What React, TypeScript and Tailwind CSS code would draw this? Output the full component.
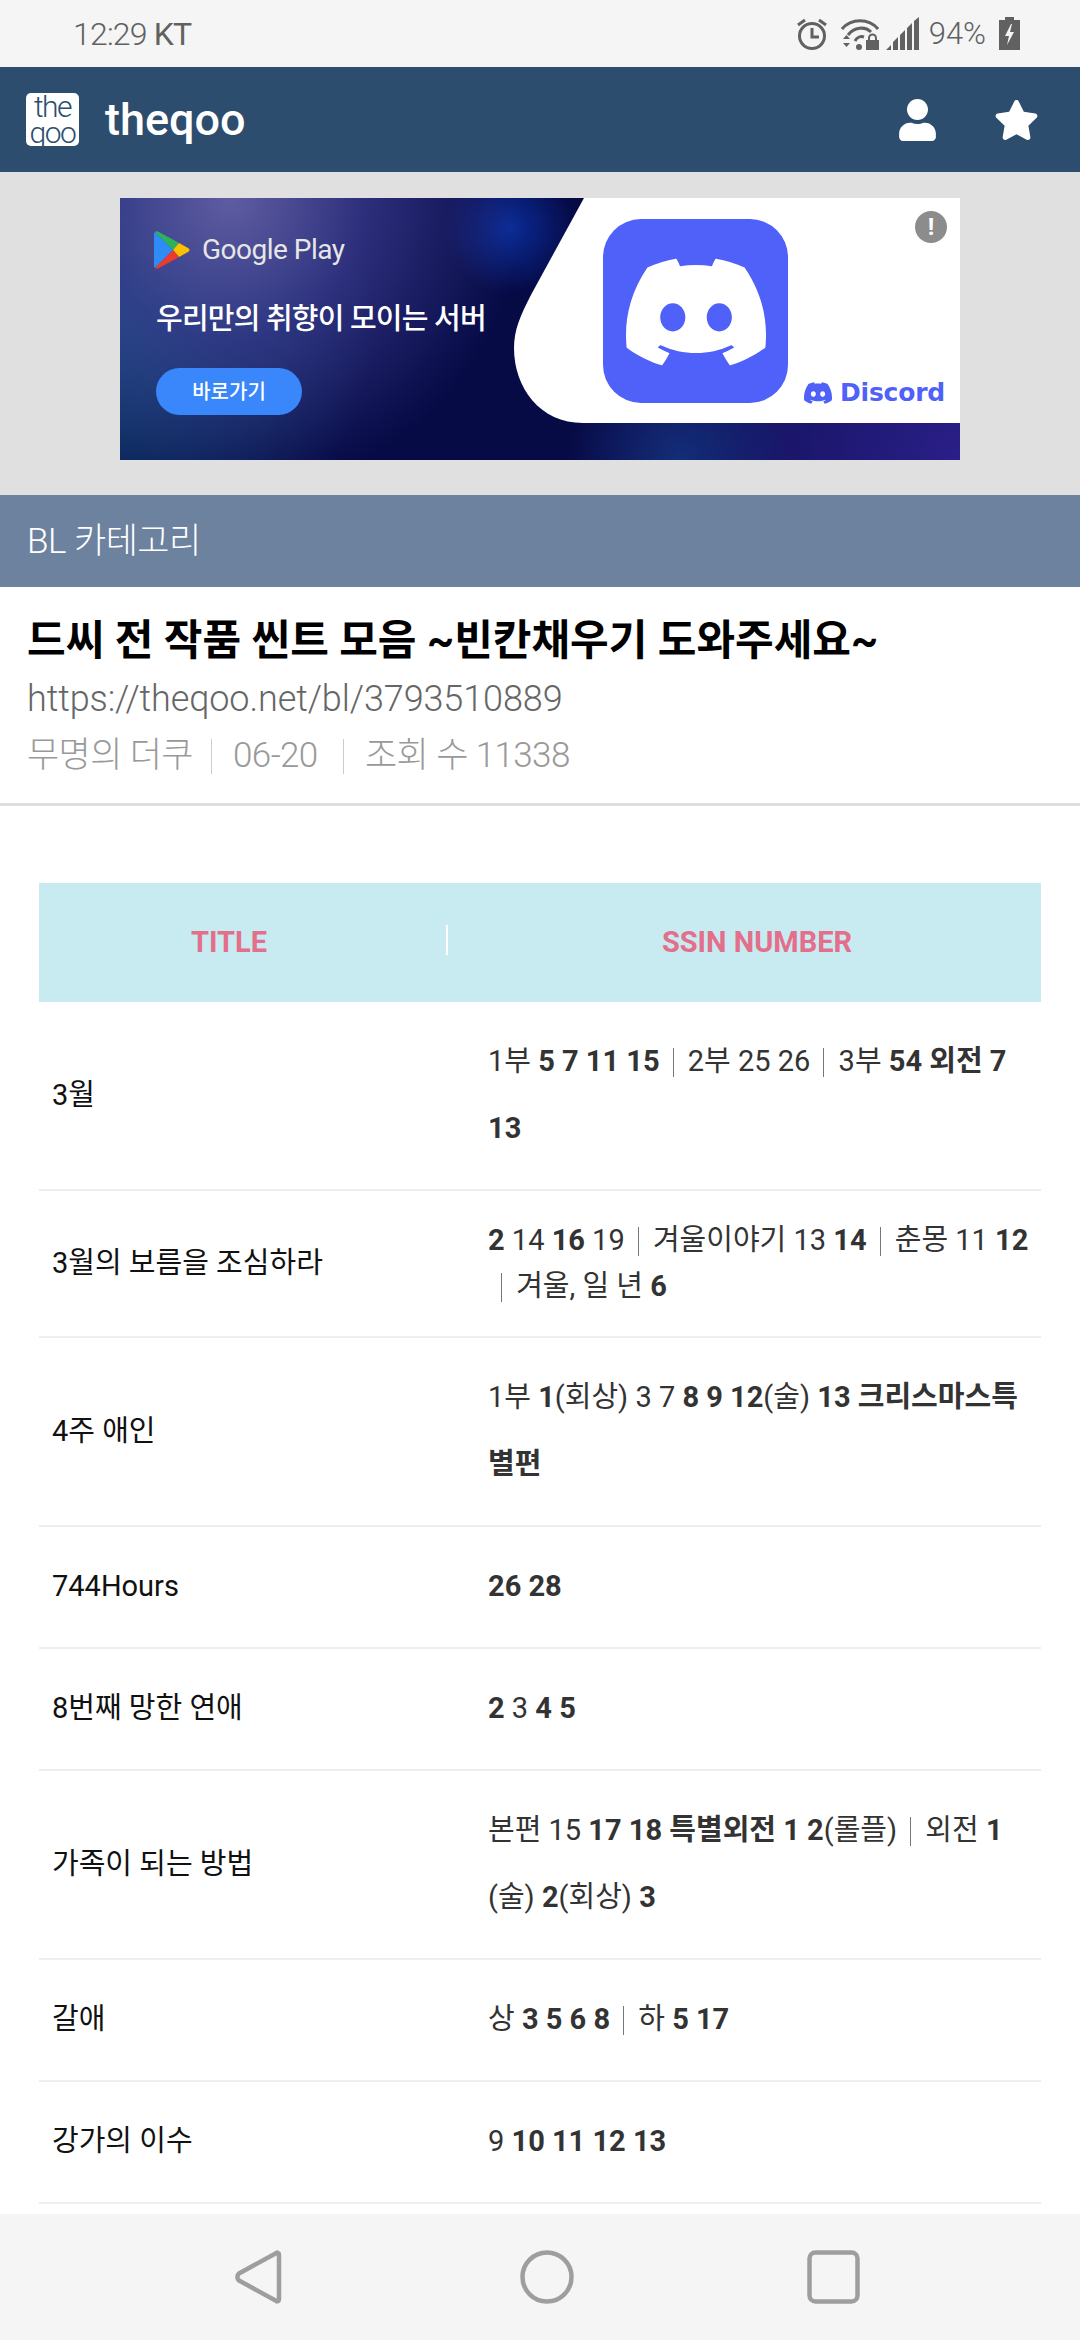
import React from 'react';
import { FaStar, FaUser } from 'react-icons/fa';
import { SiDiscord } from 'react-icons/si';

const sans = "font-['Roboto','Noto_Sans_CJK_KR',sans-serif]";

const Sep = () => <span className="ml-[13px] mr-[7px] inline-block h-[29px] w-[1px] translate-y-[6px] bg-[#777]" />;
const B = ({ children }: { children: React.ReactNode }) => <b className="font-bold">{children}</b>;

interface Row {
  title: string;
  tight?: boolean;
  ssin: React.ReactNode;
}

const rows: Row[] = [
  {
    title: '3월',
    ssin: <>1부 <B>5 7 11 15</B><Sep /> 2부 25 26<Sep /> 3부 <B>54 외전 7 13</B></>,
  },
  {
    title: '3월의 보름을 조심하라',
    tight: true,
    ssin: <><B>2</B> 14 <B>16</B> 19<Sep /> 겨울이야기 13 <B>14</B><Sep /> 춘몽 11 <B>12</B><Sep /> 겨울, 일 년 <B>6</B></>,
  },
  {
    title: '4주 애인',
    ssin: <>1부 <B>1</B>(회상) 3 7 <B>8 9 12</B>(술) <B>13 크리스마스특별편</B></>,
  },
  { title: '744Hours', ssin: <B>26 28</B> },
  { title: '8번째 망한 연애', ssin: <><B>2</B> 3 <B>4 5</B></> },
  {
    title: '가족이 되는 방법',
    ssin: <>본편 15 <B>17 18 특별외전 1 2</B>(롤플)<Sep /> 외전 <B>1</B> (술) <B>2</B>(회상) <B>3</B></>,
  },
  { title: '갈애', ssin: <>상 <B>3 5 6 8</B><Sep /> 하 <B>5 17</B></> },
  { title: '강가의 이수', ssin: <>9 <B>10 11 12 13</B></> },
];

const StatusBar = () => (
  <div className="flex h-[67px] shrink-0 items-center justify-between bg-[#f5f5f5] pl-[73px] pr-[60px] text-[#616161]">
    <span className="font-['Roboto',sans-serif] text-[32px] font-light leading-none tracking-[-0.8px]">12:29 <span className="font-normal">KT</span></span>
    <div className="flex items-center">
      <svg width="32" height="34" viewBox="0 0 32 34" fill="none" stroke="#616161" strokeWidth="3">
        <circle cx="16" cy="19" r="12.5" />
        <path d="M16 11v9h7M2 8l7-5M30 8l-7-5" />
      </svg>
      <svg className="ml-[13px]" width="38" height="33" viewBox="0 0 38 33" fill="#616161">
        <path d="M1 12C10 1 28 1 37 12" fill="none" stroke="#616161" strokeWidth="3" />
        <path d="M7 18C13 10 24 9 30 15" fill="none" stroke="#616161" strokeWidth="3" />
        <path d="M14 24c2-4 6-5 9-4" fill="none" stroke="#616161" strokeWidth="3" />
        <circle cx="18" cy="30" r="3" />
        <path d="M2 22h7l-3.5-4zM2 26h7l-3.500 4z" />
        <rect x="25" y="23" width="13" height="10" />
        <path d="M28 24v-3a3.500 3.500 0 0 1 7 0v3" fill="none" stroke="#616161" strokeWidth="2" />
      </svg>
      <svg className="ml-[7px]" width="33" height="33" viewBox="0 0 33 33" fill="#616161">
        <path d="M0 33l5-5v5zM7 33V25l5-5v13zM14 33V18l5-5v20zM21 33V11l5-5v27zM28 33V4l5-4v33z" />
      </svg>
      <span className="ml-[10px] font-['Roboto',sans-serif] text-[31px] font-light leading-none">94%</span>
      <svg className="ml-[13px]" width="21" height="33" viewBox="0 0 21 33">
        <path d="M6 0h9v3h6v30H0V3h6z" fill="#616161" />
        <path d="M12 7L6 19h4l-2 9 7-13h-4l2-8z" fill="#f5f5f5" />
      </svg>
    </div>
  </div>
);

const Header = () => (
  <div className="flex h-[105px] shrink-0 items-center bg-[#2d4d6e] pl-[26px] pr-[41px] text-white">
    <div className="flex h-[53px] w-[53px] flex-col items-center justify-center rounded-[5px] bg-white font-['Roboto',sans-serif] text-[30px] font-light leading-[26px] tracking-[-1.5px] text-[#2d4d6e]">
      <span>the</span>
      <span>qoo</span>
    </div>
    <span className={`ml-[26px] ${sans} text-[45px] font-medium leading-none`}>theqoo</span>
    <FaUser className="ml-auto h-[42px] w-[37px]" />
    <FaStar className="ml-[58px] h-[42px] w-[45px]" />
  </div>
);

const GooglePlayIcon = () => (
  <svg className="absolute left-[34px] top-[33px]" width="36" height="38" viewBox="0 0 36 38">
    <path d="M1 1L19 19 1 37C0 36 0 35 0 34V4C0 3 0 2 1 1z" fill="#2f8bf5" />
    <path d="M1 1C2 0 3 0 5 1L25 12 19 19z" fill="#2fb35a" />
    <path d="M25 12l9 5c2 1 2 3 0 4l-9 5-6-7z" fill="#fdbf00" />
    <path d="M1 37c1 1 2 1 4 0l20-11-6-7z" fill="#ee3a2c" />
  </svg>
);

const AdBanner = () => (
  <div className="h-[323px] shrink-0 bg-[#e0e0e0] pl-[120px] pt-[26px]">
    <div className="relative h-[262px] w-[840px] overflow-hidden bg-[#060a45] bg-[radial-gradient(circle_at_110px_0px,rgba(100,95,165,0.95)_0%,rgba(60,60,145,0.7)_18%,rgba(6,10,69,0)_38%),radial-gradient(circle_at_0px_120px,rgba(20,95,135,0.8)_0%,rgba(6,10,69,0)_30%),radial-gradient(circle_at_390px_30px,rgba(10,47,160,0.9)_0%,rgba(6,10,69,0)_13%),radial-gradient(circle_at_560px_262px,rgba(19,53,127,0.8)_0%,rgba(6,10,69,0)_18%),radial-gradient(circle_at_840px_262px,#2a1f88_0%,rgba(6,10,69,0)_45%)]">
      <svg className="absolute inset-0" width="840" height="262" viewBox="0 0 840 262">
        <path d="M464 0L412 95C400 118 394 132 394 150C394 190 420 225 463 225H840V0Z" fill="#fff" />
        <rect x="483" y="21" width="185" height="184" rx="38" fill="#5061f9" />
      </svg>
      <SiDiscord className="absolute left-[506px] top-[44px] h-[140px] w-[140px] text-white" />
      <GooglePlayIcon />
      <span className="absolute left-[82px] top-[31px] font-['Roboto',sans-serif] text-[28px] leading-[42px] tracking-[-0.5px] text-[#e6e6e6]">Google Play</span>
      <span className={`absolute left-[36px] top-[100px] ${sans} text-[29px] font-medium leading-[42px] tracking-[-0.8px] text-white`}>우리만의 취향이 모이는 서버</span>
      <span className={`absolute left-[36px] top-[170px] flex h-[47px] w-[146px] items-center justify-center rounded-full bg-[#3a86fb] ${sans} text-[20px] font-medium text-white`}>바로가기</span>
      <SiDiscord className="absolute left-[684px] top-[181px] h-[28px] w-[28px] text-[#5061f9]" />
      <span className="absolute left-[720px] top-[178px] font-['DejaVu_Sans',sans-serif] text-[25px] font-bold leading-[34px] tracking-[-0.2px] text-[#5061f9]">Discord</span>
      <span className="absolute left-[795px] top-[13px] flex h-[32px] w-[32px] items-center justify-center rounded-full bg-[#8c8c8c] font-['Roboto',sans-serif] text-[24px] font-bold leading-none text-white">!</span>
    </div>
  </div>
);

const PostHead = () => (
  <div className={`h-[219px] shrink-0 border-b-[3px] border-[#dedede] pl-[27px] ${sans}`}>
    <h1 className="pt-[29px] text-[42px] font-bold leading-[50px] text-black">드씨 전 작품 씬트 모음 ~빈칸채우기 도와주세요~</h1>
    <p className="mt-[6px] text-[36px] font-light leading-[54px] tracking-[-0.1px] text-[#666]">https://theqoo.net/bl/3793510889</p>
    <div className="mt-[3px] flex items-center text-[35px] font-light leading-[54px] tracking-[-0.6px] text-[#999]">
      <span className="w-[184px]">무명의 더쿠</span>
      <span className="h-[35px] w-[1px] bg-[#ccc]" />
      <span className="ml-[21px] w-[110px]">06-20</span>
      <span className="h-[35px] w-[1px] bg-[#ccc]" />
      <span className="ml-[21px]">조회 수 11338</span>
    </div>
  </div>
);

const SsinTable = () => (
  <div className="mt-[77px] px-[39px]">
    <table className={`w-full table-fixed border-collapse ${sans} text-[29px]`}>
      <thead>
        <tr className="h-[119px] bg-[#c8ebf2] text-[29px] font-bold text-[#e36f8b]">
          <th className="relative w-[434px] pr-[54px] font-bold">
            TITLE
            <span className="absolute left-[407px] top-[42px] h-[30px] w-[2px] bg-white" />
          </th>
          <th className="font-bold">SSIN NUMBER</th>
        </tr>
      </thead>
      <tbody>
        {rows.map(row => (
          <tr key={row.title} className="border-b-2 border-[#eeeeee]">
            <td className="pb-[27px] pl-[13px] pt-[26px] align-middle leading-[67px] text-[#111]">{row.title}</td>
            <td className={`pb-[27px] pl-[15px] pt-[26px] align-middle text-[#333] ${row.tight ? 'leading-[46px]' : 'leading-[67px]'}`}>{row.ssin}</td>
          </tr>
        ))}
      </tbody>
    </table>
  </div>
);

const NavBar = () => (
  <div className="flex h-[126px] shrink-0 items-center bg-[#f5f5f5] pb-[1px]">
    <svg className="ml-[235px]" width="48" height="54" viewBox="0 0 48 54" fill="none" stroke="#9e9e9e" strokeWidth="4.500">
      <path d="M44 5C44 2.500 42 2 40.500 3.500L4 23.500C1.800 25.500 1.800 28.500 4 30.500L40.500 50.500C42 52 44 51.500 44 49Z" strokeLinejoin="round" />
    </svg>
    <svg className="ml-[237px]" width="54" height="54" viewBox="0 0 54 54" fill="none" stroke="#9e9e9e" strokeWidth="4.500">
      <circle cx="27" cy="27" r="24.500" />
    </svg>
    <svg className="ml-[233px]" width="53" height="54" viewBox="0 0 53 54" fill="none" stroke="#9e9e9e" strokeWidth="4.500">
      <rect x="2.500" y="2.500" width="48" height="49" rx="6" />
    </svg>
  </div>
);

const App: React.FC = () => {
  return (
    <div className="flex h-[2340px] w-[1080px] flex-col overflow-hidden bg-white">
      <StatusBar />
      <Header />
      <AdBanner />
      <div className={`flex h-[92px] shrink-0 items-center bg-[#6d829f] pl-[27px] pt-[2px] ${sans} text-[35px] font-light tracking-[-0.5px] text-white`}>BL 카테고리</div>
      <PostHead />
      <div className="min-h-0 flex-1 overflow-hidden">
        <SsinTable />
      </div>
      <NavBar />
    </div>
  );
};

export default App;
